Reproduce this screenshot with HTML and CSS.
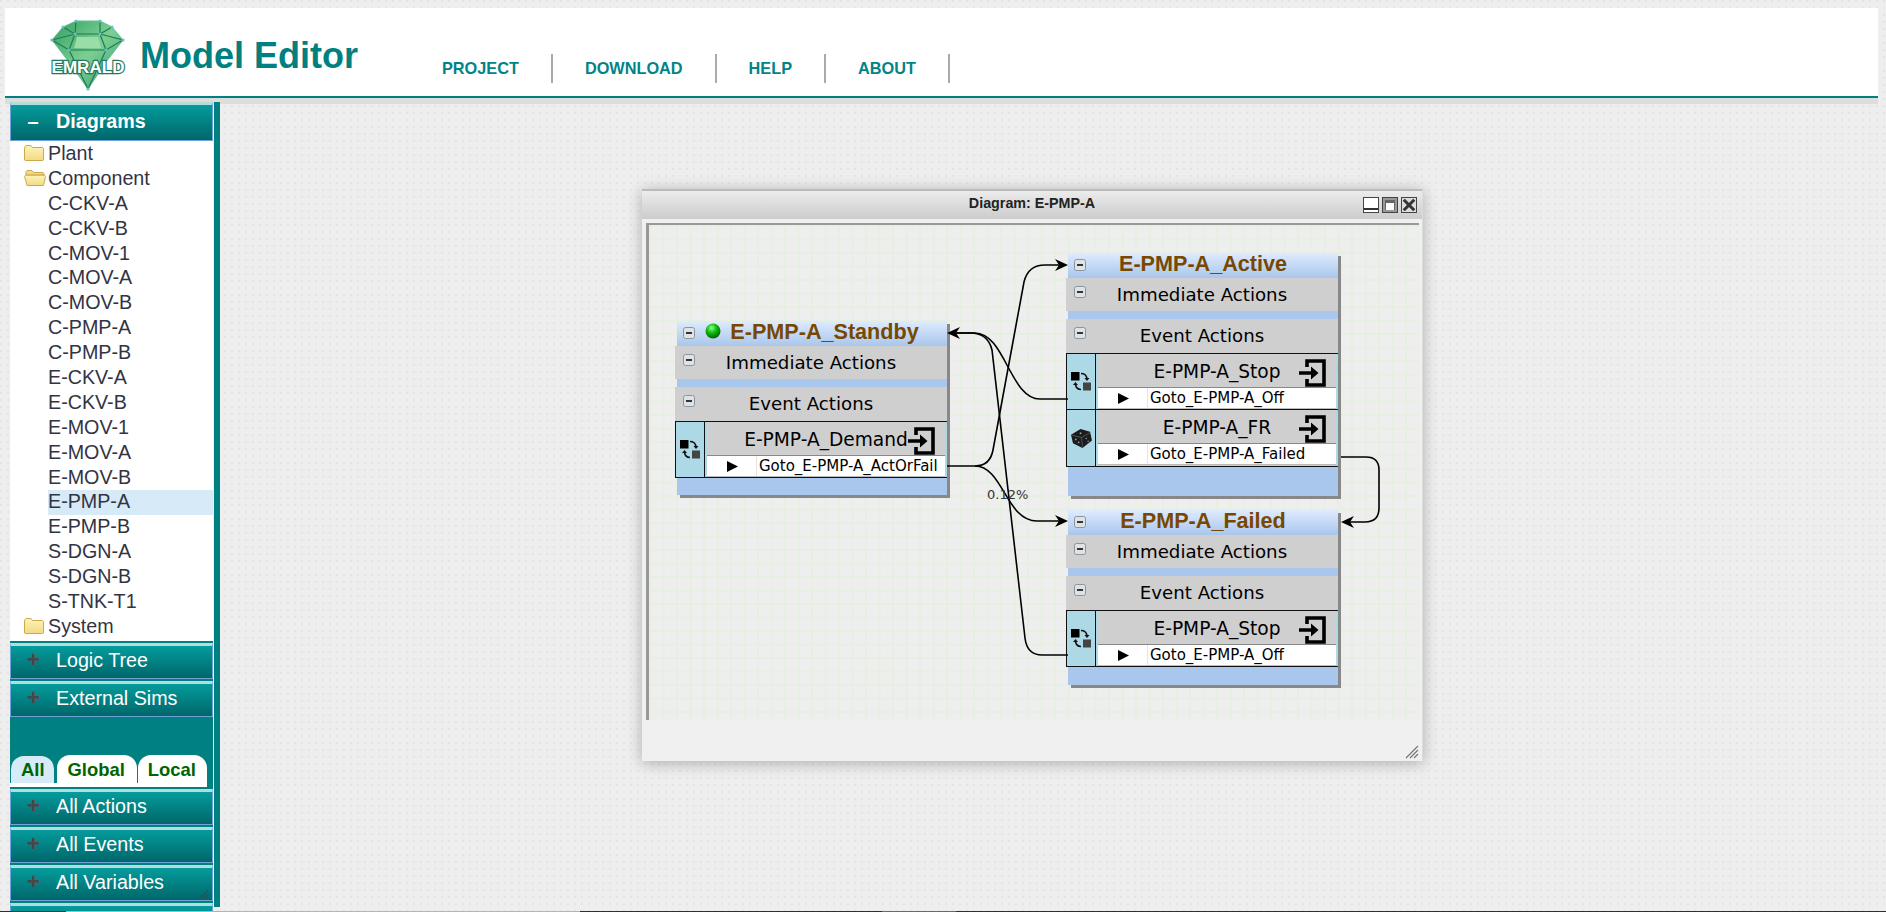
FILE: index.html
```html
<!DOCTYPE html>
<html lang="en">
<head>
    <meta charset="UTF-8">
    <title>EMRALD Model Editor</title>
    <link rel="stylesheet" href="styles.css">
</head>
<body>
    <!-- shared icons -->
    <svg class="icon-defs" aria-hidden="true">
        <defs>
            <linearGradient id="folder-fill" x1="0" y1="0" x2="0" y2="1">
                <stop offset="0" stop-color="#fdf3b8"/>
                <stop offset="1" stop-color="#f3da85"/>
            </linearGradient>
            <radialGradient id="ball-fill" cx="0.4" cy="0.3" r="0.7">
                <stop offset="0" stop-color="#8dff8d"/>
                <stop offset="0.45" stop-color="#12c012"/>
                <stop offset="1" stop-color="#006400"/>
            </radialGradient>
            <linearGradient id="gem-fill" x1="0" y1="0" x2="1" y2="1">
                <stop offset="0" stop-color="#2f9f62"/>
                <stop offset="0.5" stop-color="#7ccf92"/>
                <stop offset="1" stop-color="#2f9a70"/>
            </linearGradient>
            <symbol id="i-enter" viewBox="0 0 28 28">
                <path d="M8 8V2H25V26H8V20" fill="none" stroke="#000" stroke-width="3.6"/>
                <path d="M0 12.2H12V7.5L19.5 14L12 20.5V15.8H0Z" fill="#000"/>
            </symbol>
            <symbol id="i-swap" viewBox="0 0 21 19">
                <rect x="0" y="0" width="8.5" height="8.5" fill="#000"/>
                <rect x="12" y="10.5" width="8" height="8" fill="#444"/>
                <path d="M10 1.5C13 1.5 15.5 3.5 16 6.5" fill="none" stroke="#111" stroke-width="1.6"/>
                <path d="M13.5 6H18.5L16 9Z" fill="#111"/>
                <path d="M10 17.5C7 17.5 5 15.5 4.5 12.5" fill="none" stroke="#111" stroke-width="1.6"/>
                <path d="M2 13H7L4.5 10Z" fill="#111"/>
            </symbol>
            <symbol id="i-dice" viewBox="0 0 22 20">
                <path d="M10 0L20 3L22 12L12 20L2 15L0 6Z" fill="#1c1c1c"/>
                <path d="M1 6.5L11 9L12 19M11 9L20.5 3.5" fill="none" stroke="#5d7f8a" stroke-width="0.6"/>
                <circle cx="10" cy="4.5" r="1" fill="#999"/>
                <circle cx="5" cy="11" r="0.9" fill="#999"/>
                <circle cx="8" cy="14" r="0.9" fill="#999"/>
                <circle cx="16" cy="10" r="0.8" fill="#999"/>
                <circle cx="18" cy="13" r="0.8" fill="#999"/>
            </symbol>
            <symbol id="i-folder" viewBox="0 0 20 16">
                <path d="M1 3V1.5L2 .5H7L8.5 2.5H18.5L19.5 3.5V15L18.5 15.5H1.5L.5 15V3Z" fill="url(#folder-fill)" stroke="#cda94e"/>
            </symbol>
            <symbol id="i-folder-open" viewBox="0 0 22 16">
                <path d="M2 5V1.5L3 .5H8L9.5 2.5H19L20 3.5V5Z" fill="#f3da85" stroke="#cda94e"/>
                <path d="M.5 6.5L1.5 5.2H20.5L21.5 6.5L19.5 15.5H3Z" fill="url(#folder-fill)" stroke="#cda94e"/>
            </symbol>
            <symbol id="i-toggle" viewBox="0 0 12 12">
                <rect x=".5" y=".5" width="11" height="11" rx="2" fill="#dfe3e6" stroke="#8a949c"/>
                <rect x="3" y="5" width="6" height="2" fill="#333"/>
            </symbol>
            <symbol id="i-play" viewBox="0 0 12 12">
                <path d="M0 0L12 6L0 12Z" fill="#000"/>
            </symbol>
        </defs>
    </svg>

    <header class="top-bar">
        <svg class="logo" viewBox="48 18 80 74" role="img" aria-label="EMRALD">
            <path d="M76 21H100L112 27L123 40L106 62L88 89L69 62L52 40L63 27Z" fill="url(#gem-fill)" stroke="#5fbf95"/>
            <path d="M52 40L75 34H100L123 40L106 50H69ZM63 27L75 34M112 27L100 34M76 21L75 34M100 21L100 34M75 34L69 50L88 89M100 34L106 50L88 89" fill="none" stroke="#23794f" stroke-width="1.2"/>
            <path d="M77 37H98L101 48H74Z" fill="#9adda6"/>
            <g fill="#63c2c8">
                <circle cx="76" cy="21" r="1.6"/><circle cx="100" cy="21" r="1.6"/>
                <circle cx="63" cy="27" r="1.6"/><circle cx="112" cy="27" r="1.6"/>
                <circle cx="52" cy="40" r="1.6"/><circle cx="123" cy="40" r="1.6"/>
                <circle cx="75" cy="34" r="1.6"/><circle cx="100" cy="34" r="1.6"/>
                <circle cx="69" cy="50" r="1.6"/><circle cx="106" cy="50" r="1.6"/>
                <circle cx="88" cy="89" r="1.6"/>
            </g>
            <text class="logo-text" x="88" y="73" text-anchor="middle" textLength="73" lengthAdjust="spacingAndGlyphs">EMRALD</text>
        </svg>
        <h1 class="app-title">Model Editor</h1>
        <nav class="main-nav">
            <a class="nav-link">PROJECT</a>
            <a class="nav-link">DOWNLOAD</a>
            <a class="nav-link">HELP</a>
            <a class="nav-link">ABOUT</a>
        </nav>
    </header>

    <main class="workspace">
        <aside class="sidebar">
            <div class="panel">
                <div class="acc-head acc-open"><span class="sign">–</span>Diagrams</div>
                <ul class="tree">
                    <li><svg class="folder"><use href="#i-folder"/></svg>Plant</li>
                    <li><svg class="folder-open"><use href="#i-folder-open"/></svg>Component</li>
                    <li class="leaf">C-CKV-A</li>
                    <li class="leaf">C-CKV-B</li>
                    <li class="leaf">C-MOV-1</li>
                    <li class="leaf">C-MOV-A</li>
                    <li class="leaf">C-MOV-B</li>
                    <li class="leaf">C-PMP-A</li>
                    <li class="leaf">C-PMP-B</li>
                    <li class="leaf">E-CKV-A</li>
                    <li class="leaf">E-CKV-B</li>
                    <li class="leaf">E-MOV-1</li>
                    <li class="leaf">E-MOV-A</li>
                    <li class="leaf">E-MOV-B</li>
                    <li class="leaf selected">E-PMP-A</li>
                    <li class="leaf">E-PMP-B</li>
                    <li class="leaf">S-DGN-A</li>
                    <li class="leaf">S-DGN-B</li>
                    <li class="leaf">S-TNK-T1</li>
                    <li><svg class="folder"><use href="#i-folder"/></svg>System</li>
                </ul>
                <div class="acc-head"><span class="sign">+</span>Logic Tree</div>
                <div class="acc-head"><span class="sign">+</span>External Sims</div>
                <div class="tabs">
                    <span class="tab tab-active">All</span>
                    <span class="tab">Global</span>
                    <span class="tab tab-local">Local</span>
                </div>
                <div class="acc-head"><span class="sign">+</span>All Actions</div>
                <div class="acc-head"><span class="sign">+</span>All Events</div>
                <div class="acc-head acc-grip"><span class="sign">+</span>All Variables</div>
                <div class="acc-head"></div>
            </div>
            <div class="side-bar-edge"></div>
        </aside>

        <section class="canvas">
            <div class="window">
                <div class="win-title">
                    <span class="win-name">Diagram: E-PMP-A</span>
                    <div class="win-buttons">
                        <span class="win-btn btn-min"></span>
                        <span class="win-btn btn-max"></span>
                        <span class="win-btn btn-close">
                            <svg viewBox="0 0 12 12"><path d="M1.5 1.5L10.5 10.5M10.5 1.5L1.5 10.5" stroke="#333" stroke-width="2.6"/></svg>
                        </span>
                    </div>
                </div>
                <div class="diagram">
                    <svg class="edges" viewBox="646 223 773 497">
                        <g fill="none" stroke="#000" stroke-width="1.6">
                            <path d="M947 466H975Q990 466 993 450L1024 282Q1028 265 1045 265H1060"/>
                            <path d="M975 466C1003 466 1006 521 1037 521H1060"/>
                            <path d="M1068 399H1040C1010 399 1005 333 975 333H955"/>
                            <path d="M1068 655H1042Q1027 655 1025 638L992 350Q988 333 970 333H955"/>
                            <path d="M1341 457H1366Q1379 457 1379 470V508Q1379 522 1365 522H1350"/>
                        </g>
                        <g fill="#000">
                            <path d="M1068 265L1055 259L1059 265L1055 271Z"/>
                            <path d="M1068 521L1055 515L1059 521L1055 527Z"/>
                            <path d="M947 333L960 327L956 333L960 339Z"/>
                            <path d="M1341 522L1354 516L1350 522L1354 528Z"/>
                        </g>
                    </svg>
                    <span class="edge-label">0.12%</span>

                    <!-- standby state -->
                    <div class="node node-standby">
                        <div class="node-title">
                            <svg class="toggle toggle-title"><use href="#i-toggle"/></svg>
                            <svg class="ball" viewBox="0 0 16 16"><circle cx="8" cy="8" r="7.5" fill="url(#ball-fill)"/></svg>
                            E-PMP-A_Standby
                        </div>
                        <div class="section"><svg class="toggle"><use href="#i-toggle"/></svg>Immediate Actions</div>
                        <div class="section section-events"><svg class="toggle"><use href="#i-toggle"/></svg>Event Actions</div>
                        <div class="event">
                            <div class="event-type"><svg class="type-icon"><use href="#i-swap"/></svg></div>
                            <div class="event-body">
                                <div class="event-name">E-PMP-A_Demand<svg class="enter-icon"><use href="#i-enter"/></svg></div>
                                <div class="goto"><span class="goto-arrow"><svg class="play"><use href="#i-play"/></svg></span><span class="goto-text">Goto_E-PMP-A_ActOrFail</span></div>
                            </div>
                        </div>
                    </div>

                    <!-- active state -->
                    <div class="node node-active">
                        <div class="node-title">
                            <svg class="toggle toggle-title"><use href="#i-toggle"/></svg>
                            E-PMP-A_Active
                        </div>
                        <div class="section"><svg class="toggle"><use href="#i-toggle"/></svg>Immediate Actions</div>
                        <div class="section section-events"><svg class="toggle"><use href="#i-toggle"/></svg>Event Actions</div>
                        <div class="event">
                            <div class="event-type"><svg class="type-icon"><use href="#i-swap"/></svg></div>
                            <div class="event-body">
                                <div class="event-name">E-PMP-A_Stop<svg class="enter-icon"><use href="#i-enter"/></svg></div>
                                <div class="goto"><span class="goto-arrow"><svg class="play"><use href="#i-play"/></svg></span><span class="goto-text">Goto_E-PMP-A_Off</span></div>
                            </div>
                        </div>
                        <div class="event event-next">
                            <div class="event-type"><svg class="type-icon"><use href="#i-dice"/></svg></div>
                            <div class="event-body">
                                <div class="event-name">E-PMP-A_FR<svg class="enter-icon"><use href="#i-enter"/></svg></div>
                                <div class="goto"><span class="goto-arrow"><svg class="play"><use href="#i-play"/></svg></span><span class="goto-text">Goto_E-PMP-A_Failed</span></div>
                            </div>
                        </div>
                    </div>

                    <!-- failed state -->
                    <div class="node node-failed">
                        <div class="node-title">
                            <svg class="toggle toggle-title"><use href="#i-toggle"/></svg>
                            E-PMP-A_Failed
                        </div>
                        <div class="section"><svg class="toggle"><use href="#i-toggle"/></svg>Immediate Actions</div>
                        <div class="section section-events"><svg class="toggle"><use href="#i-toggle"/></svg>Event Actions</div>
                        <div class="event">
                            <div class="event-type"><svg class="type-icon"><use href="#i-swap"/></svg></div>
                            <div class="event-body">
                                <div class="event-name">E-PMP-A_Stop<svg class="enter-icon"><use href="#i-enter"/></svg></div>
                                <div class="goto"><span class="goto-arrow"><svg class="play"><use href="#i-play"/></svg></span><span class="goto-text">Goto_E-PMP-A_Off</span></div>
                            </div>
                        </div>
                    </div>
                </div>
                <svg class="win-grip" viewBox="0 0 14 14">
                    <path d="M13 1L1 13M13 5L5 13M13 9L9 13" stroke="#777" stroke-width="1.2"/>
                </svg>
            </div>
        </section>
    </main>

    <div class="bottom-strip"><span></span><span></span><span></span><span></span><span></span></div>
</body>
</html>
```

FILE: styles.css
```css
html, body {
    margin: 0;
    height: 912px;
    overflow: hidden;
}
body {
    font-family: "Liberation Sans", Arial, sans-serif;
    background-color: #eeeeee;
    background-image: radial-gradient(circle at 1px 1px, #e4e4e4 0.8px, transparent 1px);
    background-size: 7px 7px;
    padding-top: 8px;
    box-sizing: border-box;
    position: relative;
}
.icon-defs {
    position: absolute;
    width: 0;
    height: 0;
}

/* top bar */
.top-bar {
    display: flex;
    align-items: flex-start;
    margin: 0 8px 0 5px;
    height: 88px;
    background: white;
    border-bottom: 2px solid #008080;
    box-shadow: 0 6px 0 #dddddd;
}
.logo {
    width: 80px;
    height: 74px;
    margin: 10px 0 0 43px;
    flex: none;
}
.logo-text {
    font-family: "Liberation Sans", Arial, sans-serif;
    font-weight: bold;
    font-size: 17px;
    fill: white;
    stroke: #1f7a60;
    stroke-width: 2.4px;
    paint-order: stroke;
}
.app-title {
    margin: 27px 0 0 12px;
    font-size: 36px;
    line-height: 41px;
    font-weight: bold;
    color: #008080;
    white-space: nowrap;
}
.main-nav {
    display: flex;
    margin: 46px 0 0 52px;
}
.nav-link {
    padding: 0 32px;
    height: 29px;
    line-height: 28px;
    font-size: 16.3px;
    font-weight: bold;
    color: #008488;
    border-right: 2px solid #aaaaaa;
}

/* left side */
.workspace {
    display: flex;
    height: 810px;
    position: relative;
}
.sidebar {
    display: flex;
    align-items: flex-start;
    margin: 4px 0 0 10px;
    flex: none;
}
.panel {
    width: 203px;
    height: 809px;
    background: #008080;
    overflow: hidden;
}
.side-bar-edge {
    width: 6px;
    height: 805px;
    margin-left: 1px;
    background: #008080;
}
.acc-head {
    position: relative;
    box-sizing: border-box;
    height: 36px;
    margin-top: 2px;
    padding-left: 45px;
    line-height: 28px;
    font-size: 19.7px;
    color: white;
    border: 1px solid #6fa3d8;
    border-top: 3px solid #b5dcdc;
    background: linear-gradient(#049c9c, #00666a);
}
.acc-open {
    height: 39px;
    margin-top: 0;
    padding-top: 2px;
    font-weight: bold;
}
.sign {
    position: absolute;
    left: 16px;
    width: 12px;
    text-align: center;
    font-size: 22px;
    font-weight: bold;
    color: #504545;
}
.acc-open .sign {
    color: white;
    font-size: 20px;
}
.acc-grip::after {
    content: "";
    position: absolute;
    right: 4px;
    bottom: 1px;
    width: 11px;
    height: 11px;
    background: repeating-linear-gradient(135deg, #2a5555 0 1px, transparent 1px 3px);
    clip-path: polygon(100% 0, 100% 100%, 0 100%);
}
.tree {
    margin: 0;
    padding: 1px 0;
    list-style: none;
    background: white;
    font-size: 19.7px;
    color: #333344;
}
.tree li {
    height: 24.9px;
    line-height: 23px;
    padding-left: 38px;
    position: relative;
    white-space: nowrap;
}
.tree .selected {
    margin-left: 38px;
    padding-left: 0;
    background: #d6eaf8;
}
.folder {
    position: absolute;
    left: 14px;
    top: 3px;
    width: 20px;
    height: 16px;
}
.folder-open {
    position: absolute;
    left: 14px;
    top: 3px;
    width: 22px;
    height: 16px;
}
.tabs {
    display: flex;
    margin-top: 38px;
    width: 197px;
    height: 32px;
    gap: 1px;
    background: linear-gradient(transparent 28px, white 28px);
    padding-left: 1px;
    box-sizing: border-box;
}
.tab {
    height: 32px;
    line-height: 30px;
    padding: 0 12px 0 11px;
    font-size: 18.4px;
    font-weight: bold;
    color: #006400;
    background: white;
    border-radius: 13px 13px 0 0;
}
.tab-active {
    height: 27px;
    margin: 1px 2px 0 0;
    padding: 0 9px 0 10px;
    line-height: 28px;
    background: #d6eaf8;
}
.tab-local {
    padding: 0 11px 0 10px;
}

/* diagram window */
.canvas {
    flex: 1;
    position: relative;
}
.window {
    position: absolute;
    left: 422px;
    top: 91px;
    width: 781px;
    height: 572px;
    box-sizing: border-box;
    background: #f0f0f0;
    border-top: 2px solid #bbbbbb;
    border-right: 1px solid #dddddd;
    box-shadow: 0 2px 14px rgba(0, 0, 0, 0.28);
}
.win-title {
    position: relative;
    height: 28px;
    text-align: center;
    line-height: 25px;
    font-size: 14.3px;
    font-weight: bold;
    color: #222222;
    background: linear-gradient(#ececec, #cccccc);
}
.win-buttons {
    position: absolute;
    top: 6px;
    right: 5px;
    display: flex;
    gap: 3px;
}
.win-btn {
    display: block;
    box-sizing: border-box;
    width: 16px;
    height: 16px;
    border: 1px solid #444444;
    background: #dddddd;
}
.btn-min {
    background: linear-gradient(white 10px, #333333 10px, #333333 12px, white 12px);
}
.btn-max {
    background: white;
    box-shadow: inset 0 0 0 2px #999999, inset 0 2px 0 3px #666666;
}
.btn-close svg {
    display: block;
    width: 14px;
    height: 14px;
}
.diagram {
    position: absolute;
    left: 4px;
    top: 32px;
    width: 773px;
    height: 497px;
    box-sizing: border-box;
    border-top: 2px solid #999999;
    border-left: 3px solid #999999;
    background-color: #eeeeee;
    background-image: linear-gradient(90deg, #e6efe0 2px, transparent 2px), linear-gradient(#e6efe0 1.5px, transparent 1.5px);
    background-size: 13.5px 13.5px;
}
.edges {
    position: absolute;
    left: -3px;
    top: -2px;
    width: 773px;
    height: 497px;
    overflow: visible;
    z-index: 2;
}
.edge-label {
    position: absolute;
    left: 338px;
    top: 262px;
    z-index: 3;
    font-family: "DejaVu Sans", Verdana, sans-serif;
    font-size: 13px;
    color: #333333;
}
.win-grip {
    position: absolute;
    right: 3px;
    bottom: 2px;
    width: 14px;
    height: 14px;
}

/* state nodes */
.node {
    position: absolute;
    box-sizing: border-box;
    width: 270px;
    background: #a9c6ec;
    box-shadow: 3px 3px 0 #888888;
    font-family: "DejaVu Sans", Verdana, sans-serif;
    color: black;
}
.node-standby {
    left: 28px;
    top: 96px;
    height: 174px;
}
.node-active {
    left: 419px;
    top: 28px;
    height: 243px;
}
.node-failed {
    left: 419px;
    top: 285px;
    height: 175px;
}
.node-title {
    position: relative;
    display: flex;
    justify-content: center;
    align-items: center;
    box-sizing: border-box;
    height: 25px;
    padding-bottom: 3px;
    font-family: "Liberation Sans", Arial, sans-serif;
    font-size: 21.6px;
    font-weight: bold;
    color: #784800;
    background: linear-gradient(#dfebfe, #a9c6ec);
}
.ball {
    width: 16px;
    height: 16px;
    margin: 0 9px 3px 0;
}
.toggle {
    position: absolute;
    left: 8px;
    top: 8px;
    width: 12px;
    height: 12px;
}
.toggle-title {
    left: 6px;
    top: 6px;
}
.section {
    position: relative;
    width: 272px;
    margin-left: -2px;
    height: 33px;
    line-height: 34px;
    text-align: center;
    font-size: 18.2px;
    background: #cfcfcf;
}
.section-events {
    margin-top: 8px;
    height: 34px;
}
.event {
    display: flex;
    width: 272px;
    margin-left: -2px;
    height: 57px;
    box-sizing: border-box;
    border-top: 1px solid #111111;
    border-bottom: 1px solid #111111;
    background: #add8e6;
}
.event-next {
    height: 58px;
    margin-top: -1px;
}
.event-type {
    display: flex;
    align-items: center;
    justify-content: center;
    width: 30px;
    flex: none;
    border-right: 1px solid #111111;
    border-left: 1px solid #111111;
    box-sizing: border-box;
}
.type-icon {
    width: 21px;
    height: 19px;
}
.event-body {
    flex: 1;
    margin: 0 2px 1px 2px;
    display: flex;
    flex-direction: column;
    min-width: 0;
}
.event-name {
    position: relative;
    height: 34px;
    line-height: 35px;
    text-align: center;
    font-size: 18.6px;
    background: #cfcfcf;
    border-bottom: 1px solid #888888;
    box-sizing: border-box;
}
.enter-icon {
    position: absolute;
    right: 9px;
    top: 5px;
    width: 28px;
    height: 28px;
}
.goto {
    display: flex;
    flex: 1;
    background: white;
    border-bottom: 1px solid #bbbbbb;
    font-size: 15px;
    line-height: 20px;
}
.goto-arrow {
    display: flex;
    align-items: center;
    box-sizing: border-box;
    width: 50px;
    padding-left: 20px;
    border-right: 1px solid #e4e4e4;
}
.play {
    width: 11px;
    height: 11px;
}
.goto-text {
    padding-left: 2px;
    white-space: nowrap;
}

/* thin strip at the very bottom */
.bottom-strip {
    position: absolute;
    left: 0;
    right: 0;
    bottom: 0;
    height: 1px;
    display: flex;
    background: #2a3038;
}
.bottom-strip span:nth-child(1) { width: 66px; }
.bottom-strip span:nth-child(2) { width: 514px; background: #b4b4b4; }
.bottom-strip span:nth-child(3) { width: 302px; }
.bottom-strip span:nth-child(4) { width: 74px; background: #6a6a6a; }
```
